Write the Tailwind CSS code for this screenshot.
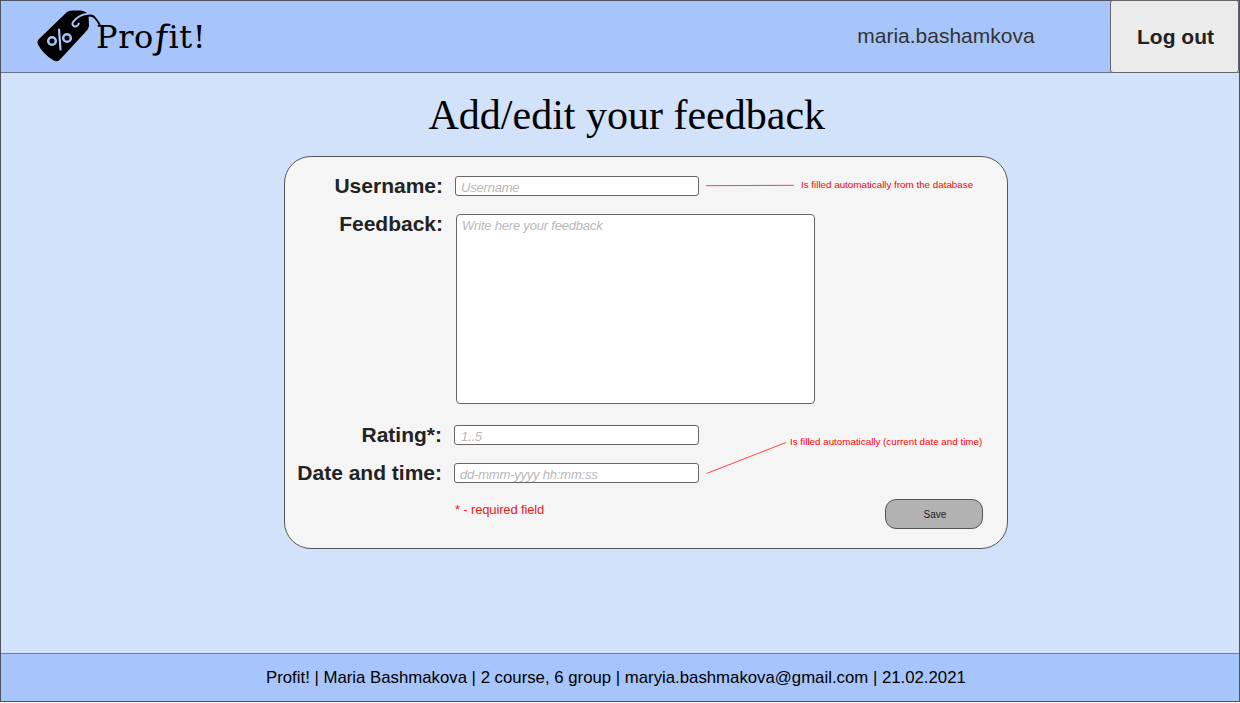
<!DOCTYPE html>
<html lang="en">
<head>
<meta charset="utf-8">
<title>Profit! - Feedback</title>
<script src="https://cdn.jsdelivr.net/npm/@tailwindcss/browser@4"></script>
</head>
<body class="w-[1240px] h-[703px] overflow-hidden bg-white font-['Liberation_Sans',Arial,sans-serif] text-[#222]">
<div class="flex h-[702px] w-[1240px] flex-col border border-[#4b5360] bg-[#d3e2fb]">
  <header class="flex h-[72px] shrink-0 border-b border-[#667389] bg-[#a7c5fb]">
    <div class="flex w-[856px] items-start pl-[35px] pt-[8px]">
      <svg class="h-[56px] w-[66px] shrink-0" viewBox="36 9 66 56" fill="none">
        <path d="M67 12Q69 10.500 72 10.500L81 10.500Q87 11.500 88.500 15L89 26Q88.500 29 86 31.500L61 58.500Q57.500 63 53 60Q43 54 38 44.500Q36.500 41.500 39 39Z" fill="#000"/>
        <path d="M89 14C82 13.500 76 18 73 22C70.500 27 78 28.500 79 22.800" stroke="#a7c5fb" stroke-width="2"/>
        <path d="M79.500 20C85 15.500 92 13.500 95.500 18.500Q98.500 22 100 25.500" stroke="#000" stroke-width="1.900"/>
        <circle cx="52" cy="41" r="3.800" stroke="#a7c5fb" stroke-width="2.500"/>
        <circle cx="67" cy="38" r="3.800" stroke="#a7c5fb" stroke-width="2.500"/>
        <path d="M59 29.500L60.500 49.500" stroke="#a7c5fb" stroke-width="2.200" stroke-linecap="round"/>
      </svg>
      <div class="-ml-[6px] mt-[3px] font-['DejaVu_Serif',serif] text-[32px] leading-[48px] tracking-[0.6px] text-black whitespace-nowrap">Pro<span class="inline-block scale-x-125 skew-x-[6deg] px-[2px] font-['Open_Sans',sans-serif] italic">f</span>it!</div>
    </div>
    <div class="w-[253px] pl-px pt-[23px] text-[21px] leading-[24px] text-[#333] whitespace-nowrap">maria.bashamkova</div>
    <button class="-mt-px ml-px h-[73px] w-[129px] shrink-0 rounded-[3px] border border-[#666] bg-[#ebebeb] pl-[2px] text-[21px] font-bold whitespace-nowrap">Log out</button>
  </header>

  <main class="flex h-[580px] shrink-0 flex-col">
    <h1 class="mt-[18px] pl-[427.5px] font-['Liberation_Serif',serif] text-[42px] leading-[48px] text-black whitespace-nowrap">Add/edit your feedback</h1>
    <section class="ml-[283px] mt-[17px] h-[393px] w-[724px] rounded-[27px] border border-[#555] bg-[#f5f5f5] pt-[19px]">
      <div class="flex h-[20px] items-center">
        <label class="w-[158px] text-right text-[21px] leading-[20px] font-bold whitespace-nowrap">Username:</label>
        <div class="ml-[12px] h-[20px] w-[244px] rounded-[3px] border border-[#666] bg-white pl-[5px] text-[13px] leading-[21px] tracking-[-0.2px] text-[#b8b8b8] italic">Username</div>
        <svg class="ml-[7px] -mt-[3px] h-[4px] w-[89px]" viewBox="0 0 89 4"><path d="M0 2.700L88 2.300" stroke="#f00" stroke-width="0.900" opacity=".8"/></svg>
        <span class="ml-[6px] -mt-[2px] text-[9.8px] leading-[12px] text-[#f00] whitespace-nowrap">Is filled automatically from the database</span>
      </div>
      <div class="mt-[18px] flex h-[190px]">
        <label class="w-[158px] text-right text-[21px] leading-[20px] font-bold whitespace-nowrap">Feedback:</label>
        <div class="ml-[13px] h-[190px] w-[359px] rounded-[4px] border border-[#666] bg-white pl-[5px] pt-px text-[13px] leading-[20px] tracking-[-0.2px] text-[#b8b8b8] italic">Write here your feedback</div>
      </div>
      <div class="mt-[21px] flex h-[59px]">
        <div class="flex w-[414px] flex-col gap-[18px]">
          <div class="flex h-[20px]">
            <label class="w-[157px] text-right text-[21px] leading-[20px] font-bold whitespace-nowrap">Rating*:</label>
            <div class="ml-[12px] h-[20px] w-[245px] rounded-[3px] border border-[#666] bg-white pl-[6px] text-[13px] leading-[21px] tracking-[-0.2px] text-[#b8b8b8] italic">1..5</div>
          </div>
          <div class="flex h-[20px]">
            <label class="w-[157px] text-right text-[21px] leading-[20px] font-bold whitespace-nowrap">Date and time:</label>
            <div class="ml-[12px] h-[20px] w-[245px] rounded-[3px] border border-[#666] bg-white pl-[5px] text-[13px] leading-[21px] tracking-[-0.2px] text-[#b8b8b8] italic">dd-mmm-yyyy hh:mm:ss</div>
          </div>
        </div>
        <svg class="ml-[7px] mt-[16px] h-[34px] w-[82px] shrink-0" viewBox="0 0 82 34"><path d="M0.500 32.500L80 1.500" stroke="#f00" stroke-width="0.900" opacity=".8"/></svg>
        <span class="ml-[2px] mt-[11px] text-[9.8px] leading-[12px] text-[#f00] whitespace-nowrap">Is filled automatically (current date and time)</span>
      </div>
      <div class="mt-[15px] flex h-[30px] justify-between pl-[170px] pr-[24px]">
        <p class="pt-[4px] text-[13px] leading-[14px] tracking-[-0.15px] text-[#e8201c] whitespace-nowrap">* - required field</p>
        <button class="h-[30px] w-[98px] rounded-[11px] border border-[#555] bg-[#b2b2b2] pl-[2px] text-[10px]">Save</button>
      </div>
    </section>
  </main>

  <footer class="h-[48px] shrink-0 border-t border-[#737f92] bg-[#a7c5fb] pl-[265px] pt-[14px] text-[16.78px] leading-[20px] text-black whitespace-nowrap">Profit! | Maria Bashmakova | 2 course, 6 group | maryia.bashmakova@gmail.com | 21.02.2021</footer>
</div>
</body>
</html>
